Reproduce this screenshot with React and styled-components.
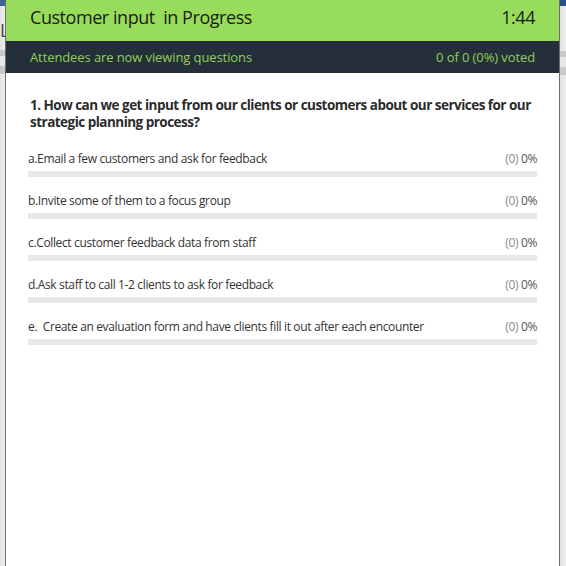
import React from "react";
import styled, { createGlobalStyle } from "styled-components";

const Global = createGlobalStyle`
  html, body { margin: 0; padding: 0; }
  body { background: #dedede; font-family: "Open Sans", "Noto Sans", sans-serif; }
`;

const Page = styled.div`
  display: flex;
  width: 566px;
  height: 566px;
  overflow: hidden;
`;

const SideStrip = styled.div`
  width: ${(p) => p.$w}px;
  flex: none;
  display: flex;
  flex-direction: column;
  background: linear-gradient(to right, #e2e2e2, #eeeeee);
`;

const Band = styled.div`
  height: ${(p) => p.$h}px;
  flex: none;
  background: ${(p) => p.$c};
  color: #444;
  font-size: 18px;
  line-height: ${(p) => p.$h}px;
  overflow: hidden;
`;

const Panel = styled.div`
  flex: none;
  width: 553px;
  border-left: 1px solid #6c6c6c;
  border-right: 1px solid #6c6c6c;
  background: #ffffff;
  display: flex;
  flex-direction: column;
`;

const Header = styled.div`
  height: 41px;
  box-sizing: border-box;
  background: #97dd5b;
  display: flex;
  align-items: flex-start;
  justify-content: space-between;
  padding: 5px 24px 0 24px;
  color: #1a1a1a;
  font-size: 18px;
  line-height: 24px;
  letter-spacing: -0.45px;
  white-space: pre;
`;

const StatusBar = styled.div`
  height: 32px;
  background: #252f3a;
  display: flex;
  align-items: center;
  justify-content: space-between;
  padding: 0 24px;
  color: #8fcf55;
  font-size: 13px;
  letter-spacing: -0.1px;
`;

const Body = styled.div`
  padding: 24px 22px 0 22px;
  display: flex;
  flex-direction: column;
`;

const Question = styled.div`
  font-size: 13.5px;
  font-weight: 700;
  line-height: 17px;
  letter-spacing: -0.52px;
  color: #2b2b2b;
  padding-left: 2px;
  margin-bottom: 20px;
`;

const Option = styled.div`
  display: flex;
  flex-direction: column;
  gap: 4px;
  margin-bottom: 16px;
`;

const OptionRow = styled.div`
  display: flex;
  justify-content: space-between;
  align-items: baseline;
  font-size: 12px;
  line-height: 16px;
  letter-spacing: -0.36px;
  color: #333333;
  white-space: pre;
`;

const Count = styled.span`
  color: #8a8a8a;
`;

const Pct = styled.span`
  color: #555555;
`;

const Track = styled.div`
  height: 6px;
  background: #e8e8e8;
`;

const Fill = styled.div`
  height: 100%;
  background: #97dd5b;
`;

const options = [
  "a.Email a few customers and ask for feedback",
  "b.Invite some of them to a focus group",
  "c.Collect customer feedback data from staff",
  "d.Ask staff to call 1-2 clients to ask for feedback",
  "e.  Create an evaluation form and have clients fill it out after each encounter",
];

export default function App() {
  return (
    <>
      <Global />
      <Page>
        <SideStrip $w={5}>
          <Band $h={6} $c="#3f64a0" />
          <Band $h={14} $c="transparent" />
          <Band $h={20} $c="transparent">L</Band>
          <Band $h={10} $c="transparent" />
          <Band $h={6} $c="#c9c9c9" />
          <Band $h={10} $c="#e8e8e8" />
          <Band $h={8} $c="#c9c9c9" />
        </SideStrip>
        <Panel>
          <Header>
            <span>Customer input  in Progress</span>
            <span>1:44</span>
          </Header>
          <StatusBar>
            <span>Attendees are now viewing questions</span>
            <span>0 of 0 (0%) voted</span>
          </StatusBar>
          <Body>
            <Question>
              1. How can we get input from our clients or customers about our services for our strategic planning process?
            </Question>
            {options.map((o) => (
              <Option key={o}>
                <OptionRow>
                  <span>{o}</span>
                  <span>
                    <Count>(0)</Count> <Pct>0%</Pct>
                  </span>
                </OptionRow>
                <Track>
                  <Fill style={{ width: "0%" }} />
                </Track>
              </Option>
            ))}
          </Body>
        </Panel>
        <SideStrip $w={6}>
          <Band $h={6} $c="#2b4f8c" />
          <Band $h={45} $c="transparent" />
          <Band $h={6} $c="#c9c9c9" />
          <Band $h={10} $c="#e8e8e8" />
          <Band $h={8} $c="#c9c9c9" />
        </SideStrip>
      </Page>
    </>
  );
}
